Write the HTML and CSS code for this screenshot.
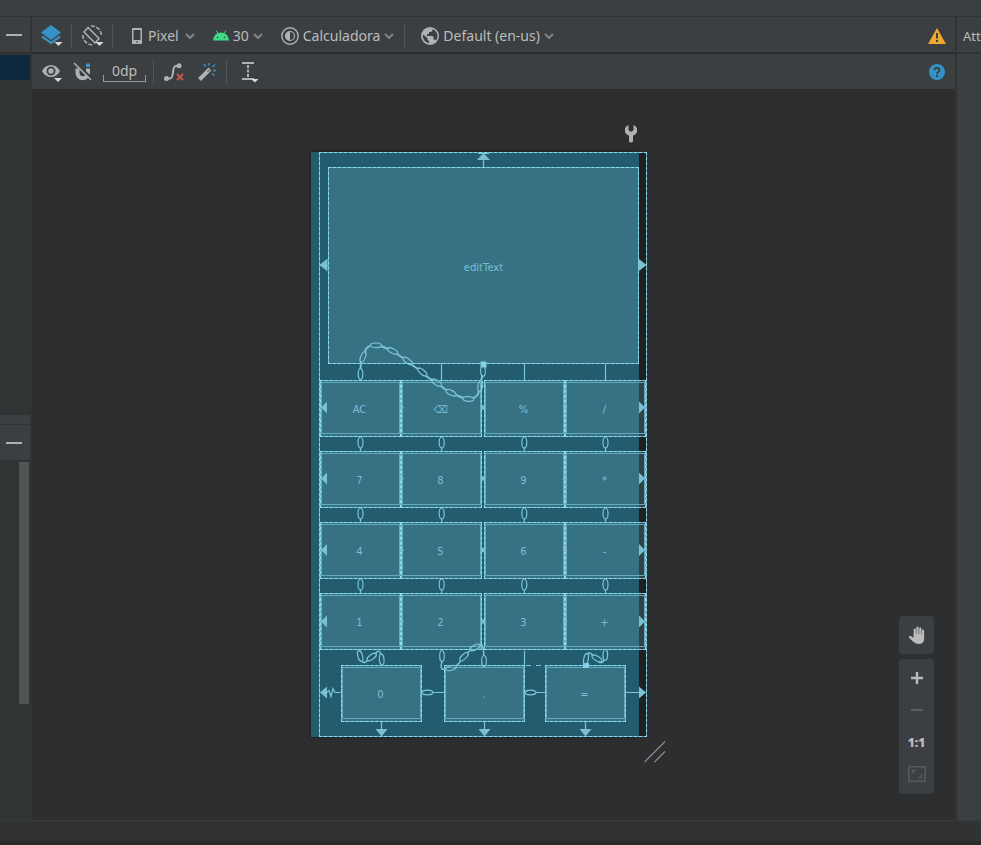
FILE: index.html
```html
<!DOCTYPE html>
<html lang="en">
<head>
<meta charset="utf-8">
<title>Layout Editor</title>
<link rel="stylesheet" href="styles.css">
</head>
<body>
<div class="topstrip"></div>
<div class="workspace">
  <aside class="left">
    <header class="panel-head"><button class="bare" aria-label="Hide palette"><span class="dash"></span></button></header>
    <div class="selected"></div>
    <div class="palette"></div>
    <div class="splitter"></div>
    <header class="panel-head tree-head"><button class="bare" aria-label="Hide component tree"><span class="dash"></span></button></header>
    <div class="tree"><div class="thumb"></div></div>
  </aside>

  <main class="editor">
    <div class="bar">
      <button class="tool" aria-label="Select design surface"><svg width="22" height="24" viewBox="0 0 22 24"><path fill="#3592c4" d="M10 1 20 8.500 10 16 0 8.500Z"/><path fill="none" stroke="#3592c4" stroke-width="2.200" d="M1 12.500 10 19l9-6.500"/><path fill="#d8d8d8" d="M13.500 18h8l-4 4z"/></svg></button>
      <i class="sep"></i>
      <button class="tool" aria-label="Orientation"><svg width="22" height="24" viewBox="0 0 22 24"><g fill="none" stroke="#afb1b3" stroke-width="1.500"><path d="M6 3.500 17 14.500 13 19 2 8z"/><path stroke-dasharray="4 1.500" d="M9 2a10 10 0 0 1 10.500 10M.8 11a10 10 0 0 0 10 10"/></g><path fill="#d8d8d8" d="M13.500 18h8l-4 4z"/></svg></button>
      <i class="sep"></i>
      <button class="pick device"><svg width="10" height="16" viewBox="0 0 10 16"><path fill="#afb1b3" fill-rule="evenodd" d="M1 0h8q1 0 1 1v14q0 1-1 1H1q-1 0-1-1V1q0-1 1-1zm.5 2v10h7V2zM4 13.500v1h2v-1z"/></svg><span>Pixel</span><svg class="chev" width="10" height="6" viewBox="0 0 10 6"><path d="m1 1 4 4 4-4"/></svg></button>
      <button class="pick api"><svg width="16" height="11" viewBox="0 0 16 11"><path stroke="#3ddc84" d="m3 .5 2 3M13 .5l-2 3"/><path fill="#3ddc84" d="M0 10.500a8 8 0 0 1 16 0z"/><circle cx="4.500" cy="7.500" r=".8" fill="#3c3f41"/><circle cx="11.500" cy="7.500" r=".8" fill="#3c3f41"/></svg><span>30</span><svg class="chev" width="10" height="6" viewBox="0 0 10 6"><path d="m1 1 4 4 4-4"/></svg></button>
      <button class="pick theme"><svg width="18" height="18" viewBox="0 0 18 18"><g fill="none" stroke="#afb1b3"><circle cx="9" cy="9" r="8.200" stroke-width="1.400"/><circle cx="9" cy="9" r="4.500" stroke-width="1.200"/></g><path fill="#afb1b3" d="M9 4.500a4.500 4.500 0 0 0 0 9z"/></svg><span>Calculadora</span><svg class="chev" width="10" height="6" viewBox="0 0 10 6"><path d="m1 1 4 4 4-4"/></svg></button>
      <i class="sep"></i>
      <button class="pick locale"><svg width="18" height="18" viewBox="0 0 18 18"><circle cx="9" cy="9" r="9" fill="#afb1b3"/><path fill="#3c3f41" d="M2 7.500 6.500 11v2l1.500 1v2.300A7.500 7.500 0 0 1 2 7.500zM11.500 2v1.500L10 5H8v2H6v2h5.500l1 1v2.500h1.500l1 1a7.500 7.500 0 0 0-3.500-11.500z"/></svg><span>Default (en-us)</span><svg class="chev" width="10" height="6" viewBox="0 0 10 6"><path d="m1 1 4 4 4-4"/></svg></button>
      <button class="tool end" aria-label="Warnings"><svg width="18" height="16" viewBox="0 0 18 16"><path fill="#f0a732" d="m9 0 9 16H0z"/><path fill="#3c3f41" d="M8 5h2v5.500H8zM8 12h2v2H8z"/></svg></button>
    </div>
    <div class="bar second">
      <button class="tool" aria-label="View options"><svg width="22" height="22" viewBox="0 0 22 22"><path fill="#afb1b3" fill-rule="evenodd" d="M1 10c4-8 14-8 18 0-4 8-14 8-18 0zm9-4.500a4.500 4.500 0 1 0 0 9 4.500 4.500 0 0 0 0-9z"/><circle cx="10" cy="10" r="2.700" fill="#afb1b3"/><path fill="#d8d8d8" d="M13 17h8l-4 4z"/></svg></button>
      <button class="tool magnet" aria-label="Autoconnect"><svg width="20" height="20" viewBox="0 0 20 20"><path fill="none" stroke="#afb1b3" stroke-width="4" d="M4.500 6.500v4c0 7.500 10.500 7.500 10.500 0v-4"/><path fill="#3592c4" d="M13 1.500h4V5h-4z"/><path stroke="#3c3f41" stroke-width="2" d="M3 .5 20 17.500"/><path stroke="#afb1b3" stroke-width="1.600" d="m1 1 17 17"/></svg></button>
      <button class="margin">0dp</button>
      <i class="sep"></i>
      <button class="tool" aria-label="Clear constraints"><svg width="20" height="18" viewBox="0 0 20 18"><path fill="none" stroke="#afb1b3" stroke-width="2" d="M2 15.500h4c5 0 1-12.500 6-12.500h3"/><circle cx="2.500" cy="15.500" r="2.500" fill="#afb1b3"/><circle cx="15" cy="2.800" r="2.500" fill="#afb1b3"/><path stroke="#c75450" stroke-width="2" d="m13 11 6 6m0-6-6 6"/></svg></button>
      <button class="tool wand" aria-label="Infer constraints"><svg width="18" height="18" viewBox="0 0 18 18"><path stroke="#afb1b3" stroke-width="4" d="M1.500 16.500 12 6"/><path stroke="#3c3f41" d="m9.500 9 2.500-2.500"/><path stroke="#3592c4" stroke-width="1.500" d="m6 1 1.500 2.500M11 0v2.500M17 1.500 14.500 4M15 7.500h3M14 10.500l2.500 2"/></svg></button>
      <i class="sep"></i>
      <button class="tool guide" aria-label="Guidelines"><svg width="18" height="22" viewBox="0 0 18 22"><path fill="none" stroke="#afb1b3" stroke-width="2" d="M2 3V2h10v1M2 17v1h10v-1"/><path stroke="#afb1b3" stroke-width="2" stroke-dasharray="3 1.500" d="M7 4v12"/><path fill="#d8d8d8" d="M10 18h7.500L14 21.500z"/></svg></button>
      <button class="tool end" aria-label="Help"><svg width="16" height="16" viewBox="0 0 16 16"><circle cx="8" cy="8" r="8" fill="#3592c4"/><path fill="none" stroke="#3c3f41" stroke-width="1.800" d="M5.500 6.200c0-3.200 5-3.200 5 0C10.500 8 8 7.800 8 10"/><path fill="#3c3f41" d="M7 11h2v2H7z"/></svg></button>
    </div>

    <section class="surface">
      <svg class="wrench" width="12" height="18" viewBox="0 0 12 18"><path fill="#afb1b3" d="M3.500 0v5L5 6.500h2L8.500 5V0a5.500 5.500 0 0 1-.5 10.500v6q-2 2-4 0v-6A5.500 5.500 0 0 1 3.500 0z"/></svg>
      <div class="device-view">
        <div class="screen"></div>
        <div class="overflow"></div>
        <div class="frame"></div>
        <div class="edit">editText</div>
        <div class="keys">
          <div class="key">AC</div><div class="key">⌫</div><div class="key">%</div><div class="key">/</div>
          <div class="key">7</div><div class="key">8</div><div class="key">9</div><div class="key">*</div>
          <div class="key">4</div><div class="key">5</div><div class="key">6</div><div class="key">-</div>
          <div class="key">1</div><div class="key">2</div><div class="key">3</div><div class="key">+</div>
        </div>
        <div class="key zero">0</div><div class="key point">.</div><div class="key equals">=</div>
        <svg class="links" viewBox="311 152 336 586">
          <defs>
            <g id="chain"><ellipse cx="0" cy="5.500" rx="2.500" ry="5.500"/><path d="M0 11v4"/></g>
            <g id="column"><use href="#chain" y="437"/><use href="#chain" y="508"/><use href="#chain" y="579"/></g>
            <ellipse id="link" rx="5.500" ry="2.300"/>
            <g id="row"><path d="M321 0l6-6V6zM645 0l-6-6V6z"/><circle cx="401.500" r="2"/><circle cx="483" r="2.200"/><circle cx="565" r="2"/></g>
            <path id="down" d="M-6 729H6L0 736.500z"/>
          </defs>
          <g class="fills">
            <path d="M483.500 153l6.500 7h-13zM319.500 265l8-6.500v13zM646.500 265l-8-6.500v13zM320 692.500l7-6v12zM646 692.500l-7-6v12z"/>
            <use href="#row" y="407.500"/><use href="#row" y="478.500"/><use href="#row" y="550"/><use href="#row" y="621.500"/>
            <use href="#down" x="381.500"/><use href="#down" x="484.500"/><use href="#down" x="585.500"/>
            <path class="anchor" d="M480.500 361.500h6v6h-6zM583 663h6v5h-6z"/>
          </g>
          <g class="strokes">
            <path d="M478 153.500h11M483.500 160v7M320 265.500h8M639 265.500h8M441.500 364v16M524.500 364v16M605.500 364v16M524.500 651v14"/>
            <path stroke-dasharray="5 5" d="M526 665.500h18"/>
            <path d="M341 692.500h-6l-2-4-2 8-2-6-2 2h-7M433 692.500h11M536 692.500h9M626 692.500h20M381.500 722v8M484.500 722v8M585.500 722v8"/>
            <use href="#link" x="427.500" y="692.500"/><use href="#link" x="530.500" y="692.500"/>
            <use href="#column" x="360.500"/><use href="#column" x="441.700"/><use href="#column" x="524.300"/><use href="#column" x="605.500"/>
            <use href="#link" transform="translate(360.500 374) rotate(90)"/>
            <use href="#link" transform="translate(363 357) rotate(-68)"/>
            <use href="#link" transform="translate(376 345.300) rotate(2)"/>
            <use href="#link" transform="translate(392.700 351) rotate(27)"/>
            <use href="#link" transform="translate(407.700 361) rotate(37)"/>
            <use href="#link" transform="translate(422.300 372) rotate(40)"/>
            <use href="#link" transform="translate(436.700 382.700) rotate(33)"/>
            <use href="#link" transform="translate(451 392.700) rotate(27)"/>
            <use href="#link" transform="translate(468.300 399) rotate(5)"/>
            <use href="#link" transform="translate(480.300 386) rotate(-80)"/>
            <use href="#link" transform="translate(483 371) rotate(90)"/>
            <path stroke-width="2" d="M360.500 369l.5-7M365 352c1-4 2-5 5-6M381 346l7 3M397 354l6 4M412 365l6 4M426 376l6 4M441 386l5 4M456 395l7 3M473 398c4-1 5-3 6-7M481 381l1.500-6"/>
            <use href="#link" transform="translate(360.200 656) rotate(75)"/>
            <use href="#link" transform="translate(371.700 657) rotate(-35)"/>
            <use href="#link" transform="translate(381.700 659.500) rotate(86)"/>
            <path stroke-width="1.500" d="M362 661c2 3 4 1 6-1M375 654c3-4 5-4 6 1"/>
            <use href="#link" transform="translate(442 656) rotate(90)"/>
            <use href="#link" transform="translate(451 668) rotate(-15)"/>
            <use href="#link" transform="translate(464 656.700) rotate(-43)"/>
            <use href="#link" transform="translate(475 647.500) rotate(-25)"/>
            <use href="#link" transform="translate(484 661) rotate(90)"/>
            <path stroke-width="1.500" d="M442 661c-2 9 0 9 4 8M456 666l5-5M467 653l5-4M479 645c5-2 4 4 5 11"/>
            <use href="#link" transform="translate(605.300 655) rotate(92)"/>
            <use href="#link" transform="translate(597 658.500) rotate(32)"/>
            <use href="#link" transform="translate(586 659) rotate(-78)"/>
            <path stroke-width="1.500" d="M604 660c-1 3-3 3-5 2M587 654c2-2 4-1 6 2"/>
          </g>
        </svg>
      </div>
      <svg class="resize" width="22" height="22" viewBox="0 0 22 22"><path stroke="#8a8b8d" stroke-width="1.200" d="M.5 21 21 .5M10.500 21 21 10.500"/></svg>

      <div class="controls">
        <button class="pan" aria-label="Pan"><svg width="18" height="20" viewBox="0 0 18 20"><g fill="none" stroke="#bbb" stroke-width="2.200" stroke-linecap="round"><path d="M6.800 12V4.500M9.500 12V2.500M12.300 12V3.500M15 13V5.500M2 12l4 4"/></g><path fill="#bbb" d="M5.700 9h10.400v6q-1 4-5 4-4 0-6-3l-4-4.500 1.500-.5 3.100 2z"/></svg></button>
        <div class="zoom">
          <button aria-label="Zoom in"><svg width="14" height="14" viewBox="0 0 14 14"><path stroke="#bbb" stroke-width="2.400" d="M1 7h12M7 1v12"/></svg></button>
          <button aria-label="Zoom out"><svg width="14" height="14" viewBox="0 0 14 14"><path stroke="#5d5f61" stroke-width="2" d="M1 7h12"/></svg></button>
          <button class="ratio">1:1</button>
          <button aria-label="Zoom to fit"><svg width="18" height="16" viewBox="0 0 18 16"><g fill="none" stroke="#5a5a59" stroke-width="1.500"><path d="M.8.8h16.400v14.400H.8zM4.500 8V4.500H8M13.500 8v3.500H10"/></g></svg></button>
        </div>
      </div>
    </section>
  </main>

  <aside class="right">
    <header class="panel-head">Att</header>
    <div class="attributes"></div>
  </aside>
</div>
<footer class="status"></footer>
</body>
</html>
```
FILE: styles.css
```css
* { box-sizing: border-box; }
body {
  margin: 0;
  height: 100vh;
  overflow: hidden;
  display: flex;
  flex-direction: column;
  background: #323232;
  color: #bbb;
  font: 14px/20px "Noto Sans", "Open Sans", sans-serif;
}
button {
  display: flex;
  align-items: center;
  justify-content: center;
  padding: 0;
  border: 0;
  background: none;
  color: inherit;
  font: inherit;
}
svg { display: block; flex: none; }

.topstrip { flex: none; height: 16px; background: #3c3f41; }
.workspace {
  flex: 1;
  min-height: 0;
  margin-top: 1px;
  display: grid;
  grid-template-columns: 30px 1fr 24px;
  gap: 2px;
}
.status {
  flex: none;
  height: 25px;
  border-top: 1px solid #3a3a3b;
  border-bottom: 4px solid #2b2b2b;
  background: #313233;
}

/* side panels */
.left, .right { display: flex; flex-direction: column; min-width: 0; overflow: hidden; }
.panel-head {
  flex: none;
  height: 35px;
  display: flex;
  align-items: center;
  background: #3c3f41;
}
.bare { width: 28px; height: 28px; }
.dash { width: 16px; height: 2px; background: #afb1b3; }
.selected { flex: none; height: 25px; margin-top: 3px; background: #0d293e; }
.palette { flex: none; height: 335px; background: #313435; }
.splitter { flex: none; height: 9px; background: #3c3f41; }
.tree-head { margin-top: 1px; }
.tree { flex: 1; margin-top: 1px; padding: 1px 1px 0 19px; background: #313435; }
.thumb { height: 242px; background: #515556; }
.right .panel-head { padding: 2px 0 0 6px; font-size: 13px; }
.attributes { flex: 1; margin-top: 2px; background: #3c3f41; }

/* toolbars */
.editor { display: flex; flex-direction: column; min-width: 0; }
.bar {
  flex: none;
  height: 37px;
  display: flex;
  align-items: center;
  padding: 2px 9px 0;
  background: #3c3f41;
  border-bottom: 2px solid #2b2b2b;
}
.second { height: 36px; padding-top: 0; border-bottom-width: 1px; }
.sep { width: 1px; height: 24px; margin: 0 10px 0 8px; background: #515456; }
.pick { gap: 4px; height: 28px; white-space: nowrap; }
.chev { fill: none; stroke: #7f868c; stroke-width: 2; }
.device { gap: 6px; margin-left: 9px; }
.api { margin-left: 18px; }
.theme { margin: 0 2px 0 18px; }
.locale { margin-left: 6px; }
.magnet { margin-left: 10px; }
.wand { margin: 0 2px 0 14px; }
.guide { margin-left: 4px; }
.end { margin-left: auto; }
.second .end { margin-right: 1px; }
.margin {
  position: relative;
  width: 43px;
  height: 20px;
  margin: 0 -1px 0 10px;
  border-bottom: 1px solid #9a9c9e;
}
.margin::before {
  content: "";
  position: absolute;
  inset: auto 0 0;
  height: 6px;
  border: solid #9a9c9e;
  border-width: 0 1px;
}

/* design surface: a free canvas */
.surface { position: relative; flex: 1; background: #2d2e30; }
.wrench { position: absolute; left: 593px; top: 35px; }
.resize { position: absolute; left: 612px; top: 651px; }
.device-view {
  position: absolute;
  left: 279px;
  top: 62px;
  width: 336px;
  height: 586px;
  color: #7abfd3;
  font: 10px/12px "DejaVu Sans", sans-serif;
}
.screen { position: absolute; inset: 0 8px 1px 0; background: #235c6f; box-shadow: 0 0 4px #1b1b1c; }
.overflow { position: absolute; inset: 0 0 1px auto; width: 8px; background: #1f2021; }
.frame { position: absolute; inset: 0 0 1px 8px; }
.frame, .edit, .key {
  border: 1px dashed #a2eeff;
  outline: 1px solid #7fd0e5a0;
  outline-offset: -1px;
}
.edit, .key {
  display: flex;
  align-items: center;
  justify-content: center;
  background: #80c8dc33;
}
.edit { position: absolute; left: 17px; top: 15px; width: 311px; height: 197px; padding-top: 4px; }
.keys {
  position: absolute;
  left: 9px;
  top: 228px;
  display: grid;
  grid-template-columns: 81px 81px 83px 81px;
  grid-auto-rows: 57px;
  row-gap: 14px;
}
.keys .key:nth-child(4n + 3) { margin-left: 2px; }
.key { position: relative; height: 57px; padding: 3px 2px 0 0; }
.key::before { content: ""; position: absolute; inset: 1px 0 2px; border: 1px solid #64a9bc; }
.zero, .point, .equals { position: absolute; top: 513px; width: 81px; }
.zero { left: 30px; }
.point { left: 133px; }
.equals { left: 234px; }
.links { position: absolute; inset: 0; }
.fills { fill: #7bbfd3; }
.anchor { fill: #84d3e8; }
.strokes { fill: none; stroke: #7bc5d9; stroke-width: 1.2; }

/* floating controls */
.controls { position: absolute; right: 21px; bottom: 26px; display: grid; gap: 5px; }
.pan, .zoom { width: 35px; border-radius: 4px; background: #3c3f41; }
.pan { height: 38px; }
.zoom { display: grid; grid-auto-rows: 32px; padding: 3px 0 4px; }
.ratio { padding-top: 2px; font: 800 12px/16px "Open Sans", sans-serif; }
```
